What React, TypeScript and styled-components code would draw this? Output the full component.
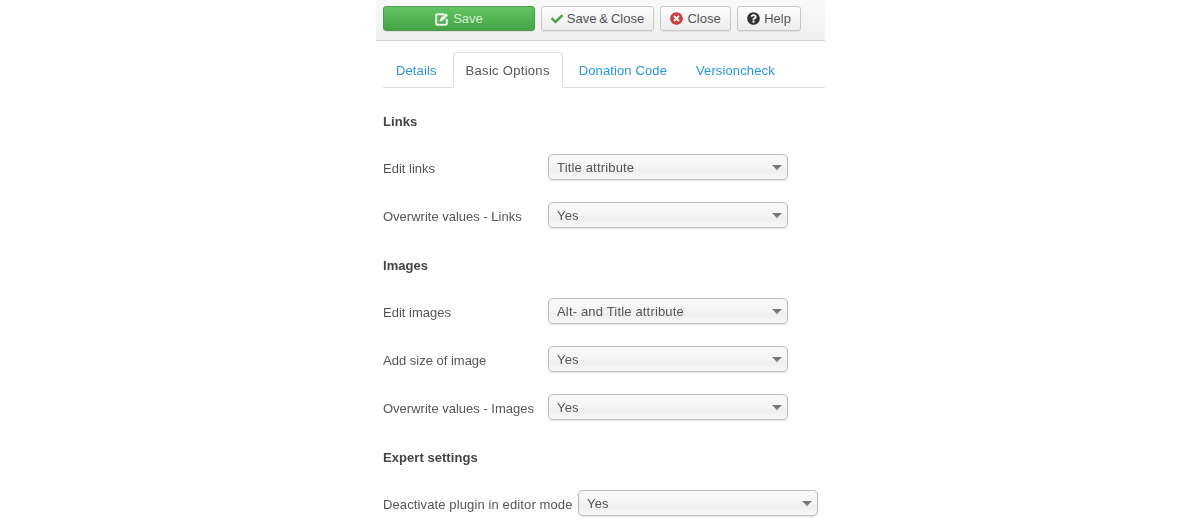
import React from 'react';
import styled, { createGlobalStyle } from 'styled-components';
import { FaCheck, FaQuestionCircle, FaTimesCircle } from 'react-icons/fa';

const GlobalStyle = createGlobalStyle`
  html, body {
    margin: 0;
    padding: 0;
    background: #fff;
  }
  body {
    font-family: "Liberation Sans", Arial, sans-serif;
    font-size: 13px;
    color: #555;
  }
`;

const Page = styled.div`
  width: 449px;
  height: 525px;
  margin: 0 auto 0 376px;
  overflow: hidden;
  filter: blur(0.3px);
`;

const Toolbar = styled.div`
  height: 41px;
  box-sizing: border-box;
  padding: 6px 7px 0;
  display: flex;
  gap: 6px;
  align-items: flex-start;
  background: linear-gradient(#f9f9f9, #f0f0f0);
  border-bottom: 1px solid #d6d6d6;
`;

const Button = styled.div<{ $width: number; $success?: boolean }>`
  width: ${(p) => p.$width}px;
  height: 25px;
  box-sizing: border-box;
  display: flex;
  align-items: center;
  justify-content: center;
  gap: 4px;
  word-spacing: -0.7px;
  border-radius: 3px;
  border: 1px solid ${(p) => (p.$success ? '#4a9a4a' : '#c8c8c8')};
  background: ${(p) =>
    p.$success ? 'linear-gradient(#62c462, #45a345)' : 'linear-gradient(#fdfdfd, #ececec)'};
  color: ${(p) => (p.$success ? '#d4efd0' : '#555')};
  box-shadow: 0 1px 1px rgba(0, 0, 0, 0.08);
`;

const Tabs = styled.div`
  margin: 11px 0 0 7px;
  height: 35px;
  display: flex;
  border-bottom: 1px solid #ddd;
`;

const Tab = styled.div<{ $active?: boolean }>`
  height: 36px;
  box-sizing: border-box;
  padding: 0 12px;
  margin-right: 3px;
  display: flex;
  align-items: center;
  letter-spacing: ${(p) => (p.$active ? '0.3px' : '0.12px')};
  color: ${(p) => (p.$active ? '#555' : '#2a95e0')};
  background: ${(p) => (p.$active ? '#fff' : 'transparent')};
  border: 1px solid ${(p) => (p.$active ? '#ddd' : 'transparent')};
  border-bottom-color: ${(p) => (p.$active ? '#fff' : 'transparent')};
  border-radius: 4px 4px 0 0;
`;

const Form = styled.div`
  padding: 8px 7px 0;
`;

const SectionTitle = styled.div`
  height: 48px;
  box-sizing: border-box;
  padding-top: 3px;
  display: flex;
  align-items: center;
  font-weight: 700;
  letter-spacing: 0.05px;
  color: #444;
`;

const Row = styled.div`
  height: 48px;
  display: flex;
  align-items: center;
`;

const Label = styled.div<{ $wide?: boolean }>`
  width: ${(p) => (p.$wide ? 195 : 165)}px;
  flex: none;
  letter-spacing: ${(p) => (p.$wide ? '0.12px' : '0')};
`;

const Select = styled.div`
  width: 240px;
  height: 26px;
  margin-bottom: 2px;
  box-sizing: border-box;
  padding: 0 8px;
  display: flex;
  align-items: center;
  justify-content: space-between;
  letter-spacing: 0.17px;
  border: 1px solid #bbb;
  border-radius: 5px;
  background: linear-gradient(#fafafa, #f4f4f4 50%, #eeeeee 62%, #f8f8f8);
  box-shadow: 0 1px 2px rgba(0, 0, 0, 0.12);
  color: #555;
`;

const Caret = styled.span`
  width: 0;
  height: 0;
  margin-right: -3px;
  border-left: 5px solid transparent;
  border-right: 5px solid transparent;
  border-top: 5px solid #777;
`;

const SaveIcon = () => (
  <svg width="14" height="14" viewBox="0 0 14 14">
    <path d="M9 2.2H2.2a1 1 0 0 0-1 1v8.6a1 1 0 0 0 1 1h8.6a1 1 0 0 0 1-1V7" fill="none" stroke="#eaf7e6" strokeWidth="2" />
    <path d="M4.4 9.8l.7-3 5.6-5.6 2.3 2.3-5.6 5.6z" fill="#eaf7e6" />
  </svg>
);

const Field = ({ label, value, wide }: { label: string; value: string; wide?: boolean }) => (
  <Row>
    <Label $wide={wide}>{label}</Label>
    <Select>
      {value}
      <Caret />
    </Select>
  </Row>
);

export default function App() {
  return (
    <Page>
      <GlobalStyle />
      <Toolbar>
        <Button $width={152} $success>
          <SaveIcon /> Save
        </Button>
        <Button $width={113}>
          <FaCheck size={12} color="#4f9f45" /> Save &amp; Close
        </Button>
        <Button $width={71}>
          <FaTimesCircle size={13} color="#c9403c" /> Close
        </Button>
        <Button $width={64}>
          <FaQuestionCircle size={13} color="#333" /> Help
        </Button>
      </Toolbar>
      <Tabs>
        <Tab>Details</Tab>
        <Tab $active>Basic Options</Tab>
        <Tab>Donation Code</Tab>
        <Tab>Versioncheck</Tab>
      </Tabs>
      <Form>
        <SectionTitle>Links</SectionTitle>
        <Field label="Edit links" value="Title attribute" />
        <Field label="Overwrite values - Links" value="Yes" />
        <SectionTitle>Images</SectionTitle>
        <Field label="Edit images" value="Alt- and Title attribute" />
        <Field label="Add size of image" value="Yes" />
        <Field label="Overwrite values - Images" value="Yes" />
        <SectionTitle>Expert settings</SectionTitle>
        <Field label="Deactivate plugin in editor mode" value="Yes" wide />
      </Form>
    </Page>
  );
}
